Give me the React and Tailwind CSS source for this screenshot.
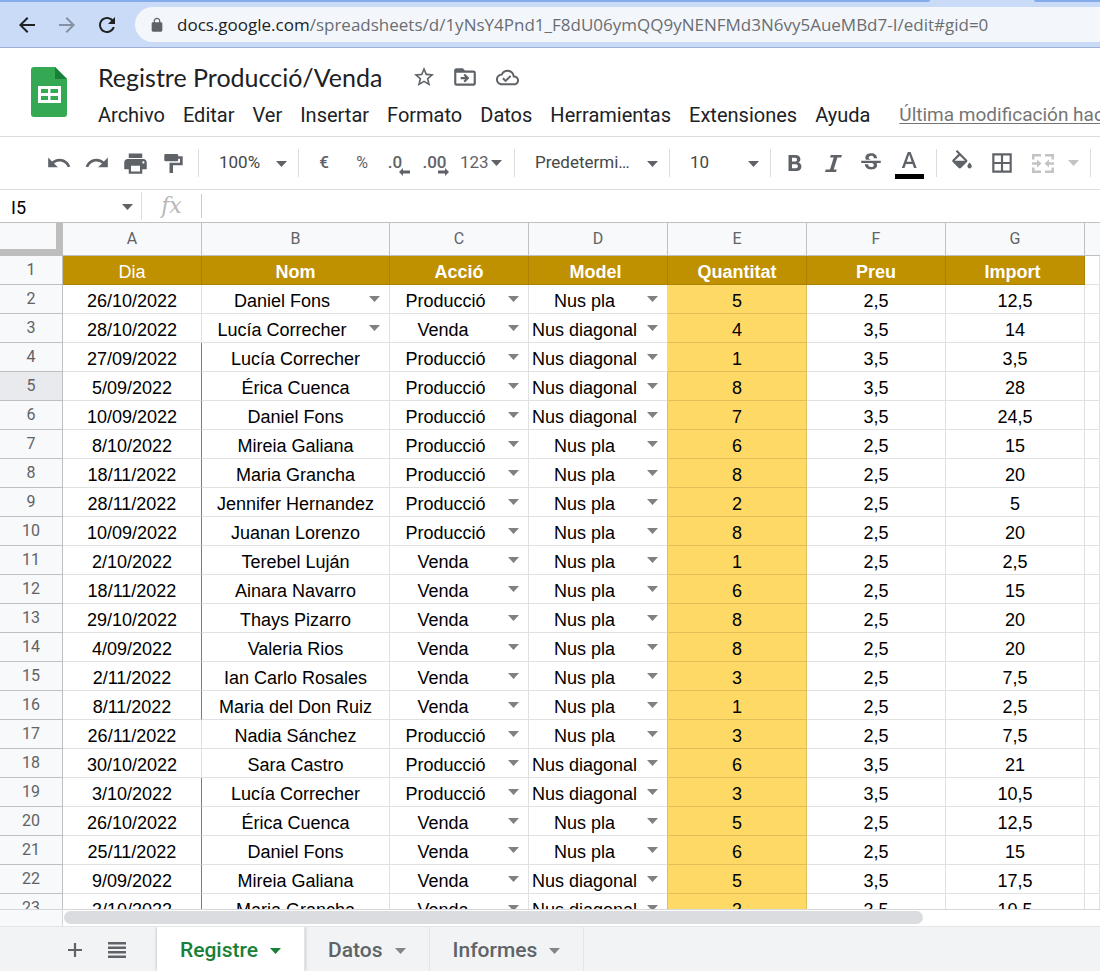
import React from "react";

const rows = [
  ["26/10/2022", "Daniel Fons", "P", "N", "5", "2,5", "12,5"],
  ["28/10/2022", "Lucía Correcher", "V", "D", "4", "3,5", "14"],
  ["27/09/2022", "Lucía Correcher", "P", "D", "1", "3,5", "3,5"],
  ["5/09/2022", "Érica Cuenca", "P", "D", "8", "3,5", "28"],
  ["10/09/2022", "Daniel Fons", "P", "D", "7", "3,5", "24,5"],
  ["8/10/2022", "Mireia Galiana", "P", "N", "6", "2,5", "15"],
  ["18/11/2022", "Maria Grancha", "P", "N", "8", "2,5", "20"],
  ["28/11/2022", "Jennifer Hernandez", "P", "N", "2", "2,5", "5"],
  ["10/09/2022", "Juanan Lorenzo", "P", "N", "8", "2,5", "20"],
  ["2/10/2022", "Terebel Luján", "V", "N", "1", "2,5", "2,5"],
  ["18/11/2022", "Ainara Navarro", "V", "N", "6", "2,5", "15"],
  ["29/10/2022", "Thays Pizarro", "V", "N", "8", "2,5", "20"],
  ["4/09/2022", "Valeria Rios", "V", "N", "8", "2,5", "20"],
  ["2/11/2022", "Ian Carlo Rosales", "V", "N", "3", "2,5", "7,5"],
  ["8/11/2022", "Maria del Don Ruiz", "V", "N", "1", "2,5", "2,5"],
  ["26/11/2022", "Nadia Sánchez", "P", "N", "3", "2,5", "7,5"],
  ["30/10/2022", "Sara Castro", "P", "D", "6", "3,5", "21"],
  ["3/10/2022", "Lucía Correcher", "P", "D", "3", "3,5", "10,5"],
  ["26/10/2022", "Érica Cuenca", "V", "N", "5", "2,5", "12,5"],
  ["25/11/2022", "Daniel Fons", "V", "N", "6", "2,5", "15"],
  ["9/09/2022", "Mireia Galiana", "V", "D", "5", "3,5", "17,5"],
  ["3/10/2022", "Maria Grancha", "V", "D", "3", "3,5", "10,5"],
];

const people = [...new Set(rows.map((r) => r[1]))].map((n) => [n, n]);
const actions = [["P", "Producció"], ["V", "Venda\u00a0"]];
const models = [["N", "Nus pla"], ["D", "Nus diagonal"]];

function Icon({ d, className, box = "0 0 24 24" }) {
  return (
    <svg viewBox={box} className={className} fill="currentColor" aria-hidden="true">
      <path d={d} />
    </svg>
  );
}

function Caret({ className = "" }) {
  return (
    <svg viewBox="0 0 11 6" className={"h-[6px] w-[11px] shrink-0 " + className} fill="currentColor" aria-hidden="true">
      <path d="M0 0h11L5.5 6z" />
    </svg>
  );
}

function Tool({ label, children, className = "w-[38px] justify-center" }) {
  return (
    <button type="button" aria-label={label} className={"flex h-9 shrink-0 items-center " + className}>
      {children}
    </button>
  );
}

function Separator() {
  return <div className="h-7 w-px shrink-0 bg-[#dadce0]" />;
}

function ToolSelect({ label, value, className }) {
  return (
    <div className={"relative shrink-0 " + className}>
      <select aria-label={label} className="h-8 w-full appearance-none bg-transparent pl-5 text-[#444746] outline-none">
        <option>{value}</option>
      </select>
      <Caret className="pointer-events-none absolute right-[11px] top-[14px]" />
    </div>
  );
}

function CellSelect({ label, value, options }) {
  return (
    <div className="relative">
      <select
        aria-label={label}
        defaultValue={value}
        className="block h-[28px] w-full appearance-none bg-transparent pr-[27px] pt-1 text-center leading-6 outline-none"
      >
        {options.map(([v, t]) => (
          <option key={v} value={v}>{t}</option>
        ))}
      </select>
      <Caret className="pointer-events-none absolute right-[9px] top-[11px] text-[#808080]" />
    </div>
  );
}

function BrowserBar() {
  return (
    <header className="shrink-0 border-b border-[#9db0d3] bg-[#c9dbf6]">
      <div className="flex h-[2px]">
        <div className="flex-1 rounded-br-sm bg-[#85ade9]" />
        <div className="w-[104px]" />
        <div className="w-[66px] rounded-bl-sm bg-[#85ade9]" />
      </div>
      <div className="flex h-[45px] items-center gap-4 pl-[15px]">
        <button type="button" aria-label="Atrás" className="text-[#202124]">
          <Icon className="size-6" d="M20 11H7.83l5.59-5.59L12 4l-8 8 8 8 1.41-1.41L7.83 13H20v-2z" />
        </button>
        <button type="button" aria-label="Adelante" className="text-[#8690a3]">
          <Icon className="size-6" d="M12 4l-1.41 1.41L16.17 11H4v2h12.17l-5.58 5.59L12 20l8-8z" />
        </button>
        <button type="button" aria-label="Recargar" className="text-[#202124]">
          <Icon className="size-6" d="M17.65 6.35C16.2 4.9 14.21 4 12 4c-4.42 0-7.99 3.58-7.99 8s3.57 8 7.99 8c3.73 0 6.84-2.55 7.73-6h-2.08c-.82 2.33-3.04 4-5.65 4-3.31 0-6-2.69-6-6s2.69-6 6-6c1.66 0 3.14.69 4.22 1.78L13 11h7V4l-2.35 2.35z" />
        </button>
        <div className="flex h-[35px] min-w-0 flex-1 items-center gap-3 rounded-l-full bg-[#f3f7fc] pl-[14px]">
          <Icon className="size-4 shrink-0 text-[#5f6368]" d="M18 8h-1V6c0-2.76-2.24-5-5-5S7 3.24 7 6v2H6c-1.1 0-2 .9-2 2v10c0 1.1.9 2 2 2h12c1.1 0 2-.9 2-2V10c0-1.1-.9-2-2-2zM15.1 8H8.9V6c0-1.71 1.39-3.1 3.1-3.1s3.1 1.39 3.1 3.1v2z" />
          <div className="truncate font-['Open_Sans',sans-serif] text-[17px] text-[#6a6d71]">
            <span className="text-[#202124]">docs.google.com</span>/spreadsheets/d/1yNsY4Pnd1_F8dU06ymQQ9yNENFMd3N6vy5AueMBd7-I/edit#gid=0
          </div>
        </div>
      </div>
    </header>
  );
}

function DocHeader() {
  const menus = ["Archivo", "Editar", "Ver", "Insertar", "Formato", "Datos", "Herramientas", "Extensiones", "Ayuda"];
  return (
    <div className="flex h-[89px] shrink-0 border-b border-[#dadce0] pl-[31px]">
      <svg viewBox="0 0 36 50" className="mt-[19px] h-[50px] w-9 shrink-0" aria-label="Hojas de cálculo" role="img">
        <path fill="#34a853" d="M3 0h21l12 12v35a3 3 0 0 1-3 3H3a3 3 0 0 1-3-3V3a3 3 0 0 1 3-3z" />
        <path fill="#188038" d="M24 0l12 12H24z" />
        <path fill="#fff" fillRule="evenodd" d="M7 19h23v17H7zM10 22v4h7v-4zM19.500 22v4h7.500v-4zM10 29v4h7v-4zM19.500 29v4h7.500v-4z" />
      </svg>
      <div className="ml-[31px] flex min-w-0 flex-1 flex-col overflow-hidden pt-[11px]">
        <div className="flex h-9 items-center text-[#5f6368]">
          <h1 className="font-[Lato,sans-serif] text-[25px] leading-8 text-[#202124]">Registre Producció/Venda</h1>
          <button type="button" aria-label="Destacar" className="ml-[30px]">
            <Icon className="size-6" d="M22 9.240l-7.190-.62L12 2 9.190 8.630 2 9.240l5.460 4.730L5.820 21 12 17.270 18.180 21l-1.630-7.030L22 9.240zM12 15.400l-3.760 2.270 1-4.280-3.320-2.880 4.380-.38L12 6.100l1.710 4.040 4.380.38-3.320 2.880 1 4.280L12 15.400z" />
          </button>
          <button type="button" aria-label="Mover" className="ml-4">
            <Icon className="size-[26px]" d="M20 6h-8l-2-2H4c-1.100 0-2 .9-2 2v12c0 1.100.9 2 2 2h16c1.100 0 2-.9 2-2V8c0-1.100-.9-2-2-2zm0 12H4V8h16v10zm-7.840-6H8v2h4.160l-1.590 1.590L11.990 17 16 13.010 11.990 9l-1.410 1.410L12.160 12z" />
          </button>
          <button type="button" aria-label="Estado del documento" className="ml-[18px]">
            <Icon className="size-[23px]" d="M19.350 10.040C18.670 6.590 15.640 4 12 4 9.110 4 6.600 5.640 5.350 8.040 2.340 8.360 0 10.910 0 14c0 3.310 2.690 6 6 6h13c2.760 0 5-2.240 5-5 0-2.640-2.050-4.780-4.650-4.960zM19 18H6c-2.210 0-4-1.790-4-4 0-2.050 1.530-3.760 3.560-3.970l1.070-.11.500-.95C8.080 7.140 9.940 6 12 6c2.620 0 4.880 1.860 5.390 4.430l.3 1.500 1.530.11c1.560.1 2.780 1.410 2.780 2.960 0 1.650-1.350 3-3 3zm-9-3.820l-2.090-2.090L6.500 13.500 10 17l6.010-6.010-1.410-1.410z" />
          </button>
        </div>
        <nav className="flex h-10 items-center gap-[18px] whitespace-nowrap font-[Roboto,sans-serif] text-[20px] text-[#202124]">
          {menus.map((m) => (
            <button key={m} type="button">{m}</button>
          ))}
          <a href="#historial" className="ml-[11px] text-[19px] text-[#757575] underline underline-offset-2">Última modificación hace</a>
        </nav>
      </div>
    </div>
  );
}

function Toolbar() {
  return (
    <div className="flex h-[53px] shrink-0 items-center overflow-hidden border-b border-[#dadce0] pl-10 font-[Roboto,sans-serif] text-[17px] text-[#5f6368]">
      <Tool label="Deshacer">
        <Icon className="size-[26px]" d="M12.500 8c-2.650 0-5.050.99-6.900 2.600L2 7v9h9l-3.620-3.620c1.390-1.160 3.160-1.880 5.120-1.880 3.540 0 6.550 2.310 7.600 5.500l2.370-.78C21.080 11.030 17.150 8 12.500 8z" />
      </Tool>
      <Tool label="Rehacer">
        <Icon className="size-[26px]" d="M18.400 10.600C16.550 8.990 14.150 8 11.500 8c-4.650 0-8.580 3.030-9.960 7.220L3.900 16c1.050-3.190 4.050-5.500 7.600-5.500 1.950 0 3.730.72 5.120 1.880L13 16h9V7l-3.600 3.600z" />
      </Tool>
      <Tool label="Imprimir">
        <Icon className="size-[27px]" d="M19 8H5c-1.660 0-3 1.340-3 3v6h4v4h12v-4h4v-6c0-1.660-1.340-3-3-3zm-3 11H8v-5h8v5zm3-7c-.55 0-1-.45-1-1s.45-1 1-1 1 .45 1 1-.45 1-1 1zm-1-9H6v4h12V3z" />
      </Tool>
      <Tool label="Copiar formato">
        <Icon className="size-[19px]" box="0 0 19 19" d="M1.500 0H13a1.200 1.200 0 0 1 1.200 1.200V2.300H18.700V11.300H9V19H5.500V8.800H16V4.800H14.200V6A1.200 1.200 0 0 1 13 7.200H1.500A1.200 1.200 0 0 1 .3 6V1.200A1.200 1.200 0 0 1 1.500 0z" />
      </Tool>
      <div className="w-1.5 shrink-0" />
      <Separator />
      <ToolSelect label="Zoom" value="100%" className="w-[99px]" />
      <Separator />
      <div className="w-1.5 shrink-0" />
      <Tool label="Moneda"><span className="font-medium">€</span></Tool>
      <Tool label="Porcentaje"><span className="text-[16px]">%</span></Tool>
      <Tool label="Reducir decimales" className="w-[28px] justify-center">
        <span className="relative font-medium">
          .0
          <Icon className="absolute -right-2 top-[18px] h-2 w-[11px]" box="0 0 11 8" d="M0 4l4-4v2.500h7v3H4V8z" />
        </span>
      </Tool>
      <Tool label="Aumentar decimales" className="w-[51px] justify-center">
        <span className="relative font-medium">
          .00
          <Icon className="absolute -right-0.5 top-[18px] h-2 w-[11px]" box="0 0 11 8" d="M11 4L7 0v2.500H0v3h7V8z" />
        </span>
      </Tool>
      <Tool label="Más formatos" className="w-[54px] gap-[2px]">123<Caret /></Tool>
      <Separator />
      <ToolSelect label="Fuente" value="Predetermi…" className="w-[154px]" />
      <Separator />
      <ToolSelect label="Tamaño de fuente" value="10" className="w-[100px]" />
      <Separator />
      <div className="w-[5px] shrink-0" />
      <Tool label="Negrita">
        <Icon className="size-4" box="0 0 16 16" d="M1.500 0H8.500C11.600 0 13.400 1.700 13.400 4.200 13.400 5.800 12.600 7 11.300 7.600 13.200 8.200 14.400 9.500 14.400 11.400 14.400 14.300 12.300 16 9 16H1.500zM5 2.800V6.500H8.100C9.300 6.500 10 5.800 10 4.700 10 3.500 9.300 2.800 8.100 2.800zM5 9.200V13.200H8.700C10.100 13.200 10.900 12.400 10.900 11.200 10.900 10 10.100 9.200 8.700 9.200z" />
      </Tool>
      <Tool label="Cursiva">
        <Icon className="size-[17px]" box="0 0 17 17" d="M5.800 0H17L16.200 2.500H12.400L8.700 14.500H11.800L11 17H0L.8 14.500H5L8.700 2.500H5z" />
      </Tool>
      <Tool label="Tachado">
        <Icon className="size-[26px]" d="M6.850 7.080C6.850 4.370 9.450 3 12.240 3c1.640 0 3 .49 3.900 1.280.77.65 1.460 1.730 1.460 3.240h-3.010c0-.31-.05-.59-.15-.85-.29-.86-1.200-1.280-2.250-1.280-1.860 0-2.340 1.020-2.340 1.700 0 .48.25.88.740 1.210.38.25.77.48 1.410.7H7.390c-.21-.34-.54-.89-.54-1.920zM21 12v-2H3v2h9.620c1.150.45 1.960.75 1.960 1.970 0 1-.81 1.670-2.280 1.670-1.540 0-2.930-.54-2.930-2.510H6.400c0 .55.080 1.130.24 1.580.81 2.290 3.290 3.300 5.670 3.300 2.270 0 5.300-.89 5.300-4.050 0-.3-.01-1.160-.48-1.940H21V12z" />
      </Tool>
      <Tool label="Color del texto" className="w-[38px] justify-center pt-1">
        <svg viewBox="0 0 29 27" className="h-[27px] w-[29px]" aria-hidden="true">
          <path fill="#5f6368" d="M6.800 16h2.700l1.400-4.100h6.700L19 16h2.700L15.600 0h-2.800zM11.700 9.700l2.500-7.100 2.500 7.100z" />
          <path fill="#000" d="M0 22h29v5H0z" />
        </svg>
      </Tool>
      <div className="w-2 shrink-0" />
      <Separator />
      <div className="w-[5px] shrink-0" />
      <Tool label="Color de relleno" className="w-[40px] justify-center">
        <Icon className="size-[26px]" d="M16.560 8.940L7.620 0 6.210 1.410l2.380 2.380-5.150 5.150c-.59.59-.59 1.540 0 2.120l5.500 5.500c.29.29.68.44 1.060.44s.77-.15 1.060-.44l5.500-5.500c.59-.58.59-1.530 0-2.120zM5.210 10L10 5.210 14.790 10H5.210zM19 11.500s-2 2.170-2 3.500c0 1.100.9 2 2 2s2-.9 2-2c0-1.330-2-3.500-2-3.500z" />
      </Tool>
      <Tool label="Bordes" className="w-[40px] justify-center">
        <Icon className="size-[26px]" d="M3 3v18h18V3H3zm8 16H5v-6h6v6zm0-8H5V5h6v6zm8 8h-6v-6h6v6zm0-8h-6V5h6v6z" />
      </Tool>
      <Tool label="Combinar celdas" className="w-[42px] justify-center text-[#c1c3c6]">
        <Icon className="h-[19px] w-[22px]" box="0 0 22 19" d="M0 0h9v2.500H2.500v3H0zM13 0h9v5.500h-2.500v-3H13zM0 13.500h2.500v3H9V19H0zM19.500 13.500H22V19h-9v-2.500h6.500zM0 8.300h5V5.500l4.500 4-4.500 4v-2.800H0zM22 8.300h-5V5.500l-4.500 4 4.500 4v-2.800h5z" />
      </Tool>
      <Tool label="Opciones de combinación" className="w-[18px] justify-center text-[#c1c3c6]"><Caret /></Tool>
      <div className="w-2 shrink-0" />
      <Separator />
    </div>
  );
}

function FormulaBar() {
  return (
    <div className="flex h-[33px] shrink-0 items-center border-b border-[#c0c0c0]">
      <input aria-label="Cuadro de nombres" defaultValue="I5" className="h-8 w-[113px] pl-[11px] pt-0.5 font-[Roboto,sans-serif] text-[18px] text-black outline-none" />
      <button type="button" aria-label="Intervalos con nombre" className="flex w-[28px] justify-center pt-0.5 text-[#5f6368]"><Caret /></button>
      <Separator />
      <label htmlFor="formula" className="w-[59px] text-center font-['DejaVu_Serif',serif] text-[22px] italic leading-8 text-[#b8b8b8]">fx</label>
      <div className="h-6 w-px bg-[#c8cacd]" />
      <input id="formula" className="h-8 min-w-0 flex-1 px-2 font-['Liberation_Sans',sans-serif] text-[18px] outline-none" />
    </div>
  );
}

const rowHead = "h-[29px] border-b border-r border-[#c0c0c0] p-0 text-center font-[Roboto,sans-serif] text-[16px] leading-7 font-normal text-[#5f6368] ";
const cell = "h-[29px] border-b border-r p-0 text-center ";
const plain = cell + "border-[#e1e1e1] ";
const text = "pt-1 leading-6 ";
const head = "border-b border-r border-[#ad8200] bg-[#bf9000] p-0 pt-1 text-center leading-6 text-white ";

function Sheet() {
  const letters = ["A", "B", "C", "D", "E", "F", "G"];
  const heads = ["Nom", "Acció", "Model\u00a0", "Quantitat", "Preu", "Import\u00a0"];
  return (
    <div className="min-h-0 flex-1 overflow-hidden bg-white">
      <table className="w-full table-fixed border-separate border-spacing-0 font-['Liberation_Sans',sans-serif] text-[18px] text-black">
        <colgroup>
          <col className="w-[63px]" />
          <col className="w-[139px]" />
          <col className="w-[188px]" />
          <col className="w-[139px]" />
          <col className="w-[139px]" />
          <col className="w-[139px]" />
          <col className="w-[139px]" />
          <col className="w-[139px]" />
          <col />
        </colgroup>
        <thead>
          <tr>
            <td className="h-[33px] border-b-[7px] border-r-[7px] border-[#bdbdbd] bg-[#f8f9fa] p-0" />
            {letters.map((l) => (
              <th key={l} scope="col" className="h-[33px] border-b border-r border-[#c0c0c0] bg-[#f8f9fa] p-0 font-[Roboto,sans-serif] text-[16px] leading-8 font-normal text-[#5f6368]">{l}</th>
            ))}
            <td className="border-b border-[#c0c0c0] bg-[#f8f9fa] p-0" />
          </tr>
        </thead>
        <tbody>
          <tr>
            <th scope="row" className={rowHead + "bg-[#f8f9fa]"}>1</th>
            <td className={head}>Dia</td>
            {heads.map((h) => (
              <td key={h} className={head + "font-bold"}>{h}</td>
            ))}
            <td className={plain} />
          </tr>
          {rows.map((r, i) => {
            const n = i + 2;
            const marked = (n >= 4 && n <= 16) || n >= 19;
            return (
              <tr key={n}>
                <th scope="row" className={rowHead + (n === 5 ? "bg-[#e8eaed]" : "bg-[#f8f9fa]")}>{n}</th>
                <td className={plain + text + (marked ? "border-r-[#34a853]" : "")}>{r[0]}</td>
                {n < 4 ? (
                  <td className={plain}><CellSelect label={"Nom " + n} value={r[1]} options={people} /></td>
                ) : (
                  <td className={plain + text}>{r[1]}</td>
                )}
                <td className={plain}><CellSelect label={"Acció " + n} value={r[2]} options={actions} /></td>
                <td className={plain + (n > 4 ? "border-r-[#e0bf5a]" : "border-r-[#ffd966]")}><CellSelect label={"Model " + n} value={r[3]} options={models} /></td>
                <td className={cell + text + "border-[#e0bf5a] bg-[#ffd966]"}>{r[4]}</td>
                <td className={plain + text}>{r[5]}</td>
                <td className={plain + text}>{r[6]}</td>
                <td className={plain} />
              </tr>
            );
          })}
        </tbody>
      </table>
    </div>
  );
}

function Tab({ name, active }) {
  return (
    <button
      type="button"
      className={
        "flex h-full items-center gap-3 border-r border-[#e3e5e8] px-[23px] pt-1 font-medium " +
        (active ? "bg-white text-[#188038] shadow-[0_0_3px_rgba(60,64,67,0.35)]" : "text-[#5f6368]")
      }
    >
      {name}
      <Caret className={active ? "" : "text-[#80868b]"} />
    </button>
  );
}

function Footer() {
  return (
    <footer className="shrink-0">
      <div className="flex h-[17px] border-t border-[#d5d7da] bg-white">
        <div className="w-[63px] shrink-0 border-r border-[#d5d7da] bg-[#f8f9fa]" />
        <div className="flex-1 px-px pt-px">
          <div className="h-[13px] w-[83%] rounded-full bg-[#dadce0]" />
        </div>
      </div>
      <div className="flex h-[45px] items-center overflow-hidden border-t border-[#e3e5e8] bg-[#f1f3f4] pl-[57px] font-[Roboto,sans-serif] text-[21px]">
        <button type="button" aria-label="Añadir hoja" className="flex w-9 justify-center pt-0.5 text-[#5f6368]">
          <Icon className="size-[14px]" box="0 0 14 14" d="M5.900 0h2.200v5.900H14v2.200H8.100V14H5.900V8.100H0V5.900h5.900z" />
        </button>
        <button type="button" aria-label="Todas las hojas" className="ml-1.5 flex w-9 justify-center pt-0.5 text-[#5f6368]">
          <Icon className="h-4 w-[18px]" box="0 0 18 16" d="M0 0h18v2.500H0zM0 4.500h18V7H0zM0 9h18v2.500H0zM0 13.500h18V16H0z" />
        </button>
        <div className="w-[22px] shrink-0" />
        <Tab name="Registre" active />
        <Tab name="Datos" />
        <Tab name="Informes" />
      </div>
    </footer>
  );
}

export default function App() {
  return (
    <div className="flex h-screen flex-col overflow-hidden bg-white">
      <BrowserBar />
      <DocHeader />
      <Toolbar />
      <FormulaBar />
      <Sheet />
      <Footer />
    </div>
  );
}
